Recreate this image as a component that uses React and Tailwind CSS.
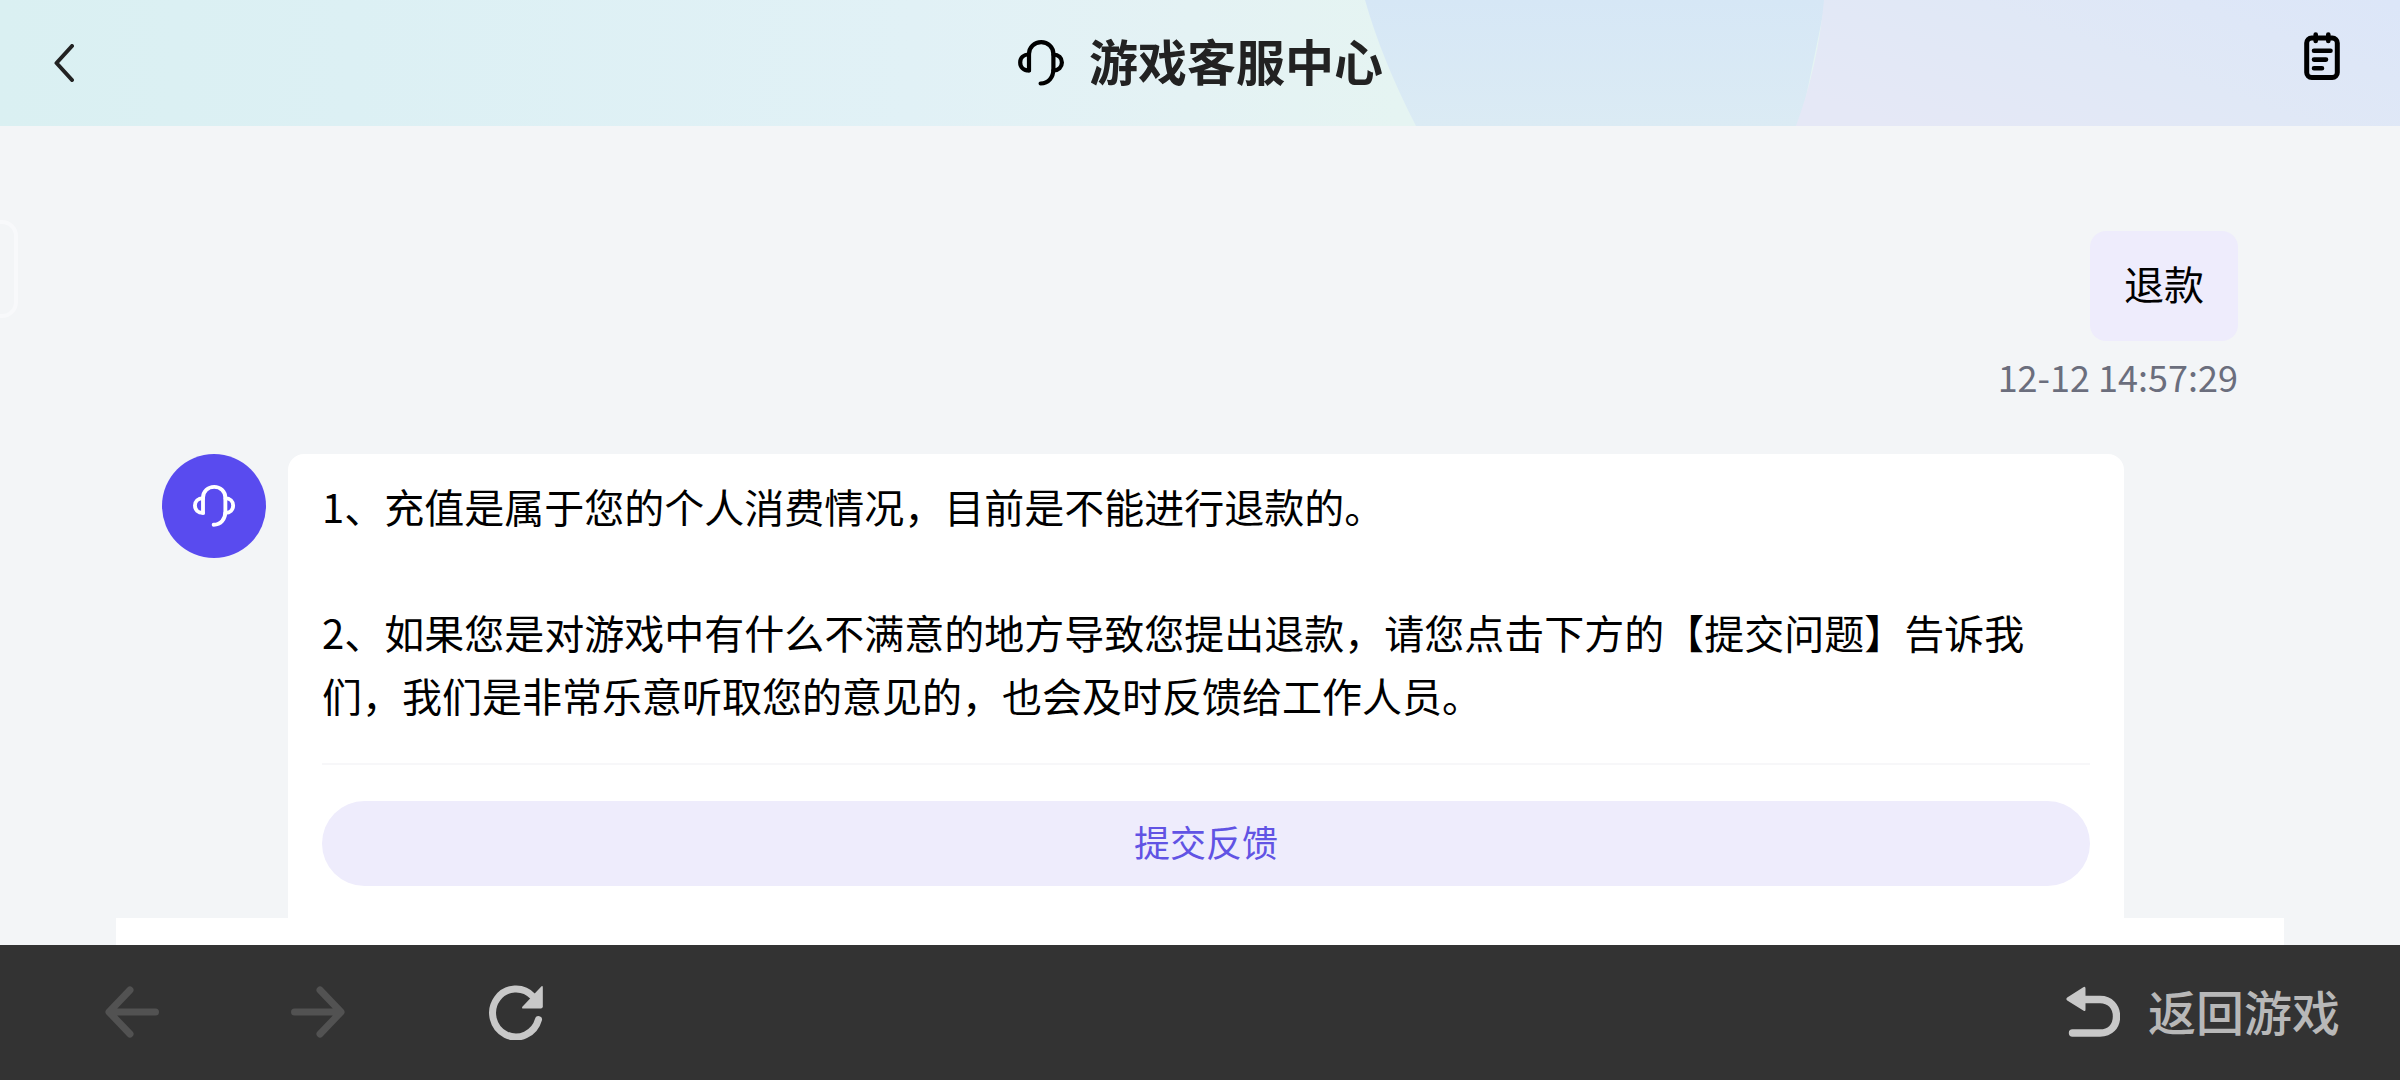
const FONT = 'font-["Noto_Sans_CJK_SC",sans-serif]';

function HeadsetIcon({ className }) {
  return (
    <svg viewBox="0 0 48 48" className={className} fill="none" stroke="currentColor" strokeWidth="4.2" strokeLinecap="round" strokeLinejoin="round" aria-hidden="true">
      <path d="M12 31.5V15C12 8 17.5 3.2 24.2 3.2S36.4 8 36.4 15V30C36.4 38.5 31.5 44.3 23.6 44.5" />
      <path d="M12 15.5C6.500 15.500 3.200 19 3.200 23.500S6.500 31.500 12 31.500" />
      <path d="M36.4 15.5C41.500 15.500 44.900 19 44.900 23.500S41.500 31.500 36.400 31.500" />
    </svg>
  );
}

function ChevronIcon() {
  return (
    <svg viewBox="0 0 20 38" className="h-[38px] w-5" fill="none" stroke="currentColor" strokeWidth="4" strokeLinecap="round" strokeLinejoin="round" aria-hidden="true">
      <path d="M18 2L2.500 19L18 36" />
    </svg>
  );
}

function NotesIcon() {
  return (
    <svg viewBox="0 0 36 48" className="h-12 w-9" fill="none" stroke="currentColor" strokeLinecap="round" aria-hidden="true">
      <rect x="2.700" y="6" width="30.600" height="39.500" rx="5" strokeWidth="5" />
      <path d="M11.700 2.500V9M24.300 2.500V9" strokeWidth="4.600" />
      <path d="M10 18.800H26.500M10 27.600H22M10 36.200H18" strokeWidth="4.600" />
    </svg>
  );
}

function ArrowIcon({ className }) {
  return (
    <svg viewBox="0 0 54 52" className={className} fill="none" stroke="currentColor" strokeWidth="7" strokeLinecap="round" strokeLinejoin="round" aria-hidden="true">
      <path d="M25 4L4 26L25 48M5 26H50.500" />
    </svg>
  );
}

function ReloadIcon() {
  return (
    <svg viewBox="0 0 54 56" className="h-14 w-[54px]" aria-hidden="true">
      <path d="M49.500 35.500A23.400 24 0 1 1 44 12.500" fill="none" stroke="currentColor" strokeWidth="7" strokeLinecap="round" />
      <path d="M53.800 3.500V22.500Q53.800 24.500 51.800 24.500H34.500Q32 24.500 33.600 22.500L51.800 3Q53.800 1 53.800 3.500Z" fill="currentColor" />
    </svg>
  );
}

function ReturnIcon() {
  return (
    <svg viewBox="0 0 54 52" className="h-[52px] w-[54px]" aria-hidden="true">
      <path d="M17 13.500H34C44 13.500 50.500 20.500 50.500 30.500S44 47 34 47H6.500" fill="none" stroke="currentColor" strokeWidth="7.400" strokeLinecap="round" />
      <path d="M19.500 2.500V23.500Q19.500 26 17.300 24.500L1.200 14.500Q-.5 13 1.200 11.500L17.300 1.200Q19.500 0 19.500 2.500Z" fill="currentColor" />
    </svg>
  );
}

function HeaderBackdrop() {
  return (
    <svg viewBox="0 0 2400 126" preserveAspectRatio="none" className="absolute inset-0 -z-10 h-full w-full" aria-hidden="true">
      <defs>
        <linearGradient id="mint" gradientUnits="userSpaceOnUse" x1="0" y1="60" x2="1400" y2="100">
          <stop offset="0" stopColor="#daf0f2" />
          <stop offset="0.250" stopColor="#dcf0f4" />
          <stop offset="0.650" stopColor="#e1f1f6" />
          <stop offset="0.850" stopColor="#e4f2f4" />
          <stop offset="1" stopColor="#e5f4f2" />
        </linearGradient>
        <linearGradient id="sky" x1="0" y1="0" x2="0" y2="1">
          <stop offset="0" stopColor="#d6e7f6" />
          <stop offset="1" stopColor="#dbebf4" />
        </linearGradient>
        <linearGradient id="lilac" gradientUnits="userSpaceOnUse" x1="1960" y1="150" x2="2060" y2="-120">
          <stop offset="0" stopColor="#e5e8f6" />
          <stop offset="0.500" stopColor="#e0e8f6" />
          <stop offset="1" stopColor="#dce6f8" />
        </linearGradient>
      </defs>
      <rect width="2400" height="126" fill="url(#mint)" />
      <path d="M1365 0Q1382 60 1416 126H1800L1826 0Z" fill="url(#sky)" />
      <path d="M1824 0Q1818 66 1796 126H2400V0Z" fill="url(#lilac)" />
    </svg>
  );
}

export default function App() {
  return (
    <div className={`${FONT} relative flex h-screen flex-col overflow-hidden bg-[#f3f5f7] text-black`}>
      <header className="relative isolate grid h-[126px] shrink-0 grid-cols-[1fr_auto_1fr] items-center">
        <HeaderBackdrop />
        <button type="button" aria-label="返回" className="justify-self-start pl-[54px] text-[#222]">
          <ChevronIcon />
        </button>
        <div className="flex items-center gap-6">
          <HeadsetIcon className="size-12" />
          <h1 className="pb-1.5 text-[49px] leading-[60px] font-bold text-[#222]">游戏客服中心</h1>
        </div>
        <button type="button" aria-label="记录" className="justify-self-end pr-[60px] pb-[14px] text-black">
          <NotesIcon />
        </button>
      </header>

      <div className="absolute top-[220px] -left-6 h-[98px] w-[42px] rounded-2xl border-4 border-[#f8f9fb]" />

      <main className="flex min-h-0 flex-1 flex-col">
        <section className="flex min-h-0 flex-1 flex-col gap-12 overflow-hidden px-[162px] pt-[105px]">
          <div className="flex flex-col items-end gap-[5px]">
            <p className="rounded-2xl bg-[#eeecfc] px-[34px] pt-[21px] pb-[27px] text-[40px] leading-[62px]">退款</p>
            <time className="text-[36px] leading-[60px] text-[#6b6e7d]">12-12 14:57:29</time>
          </div>

          <div className="flex shrink-0 items-start gap-[22px] pr-[114px]">
            <div className="grid size-[104px] shrink-0 place-items-center rounded-full bg-[#594bef] text-white">
              <HeadsetIcon className="size-11" />
            </div>
            <article className="flex-1 rounded-2xl bg-white px-[34px] pt-[21px] pb-12">
              <div className="flex flex-col gap-[63px] text-[40px] leading-[63px]">
                <p>1、充值是属于您的个人消费情况，目前是不能进行退款的。</p>
                <p>2、如果您是对游戏中有什么不满意的地方导致您提出退款，请您点击下方的【提交问题】告诉我们，我们是非常乐意听取您的意见的，也会及时反馈给工作人员。</p>
              </div>
              <hr className="mt-9 mb-9 border-t-2 border-[#f7f7f9]" />
              <button type="button" className="h-[85px] w-full rounded-full bg-[#eeecfc] pb-1.5 text-[36px] text-[#6153e4]">
                提交反馈
              </button>
            </article>
          </div>
        </section>
        <div className="mx-[116px] h-[27px] shrink-0 bg-white" />
      </main>

      <footer className="flex h-[135px] shrink-0 items-center justify-between bg-[#333] pr-[60px] pb-0.5 pl-[105px]">
        <nav className="flex items-center">
          <button type="button" disabled aria-label="后退" className="text-[#525252]">
            <ArrowIcon className="h-[52px] w-[54px]" />
          </button>
          <button type="button" disabled aria-label="前进" className="ml-[132px] text-[#525252]">
            <ArrowIcon className="h-[52px] w-[54px] rotate-180" />
          </button>
          <button type="button" aria-label="刷新" className="ml-36 text-[#c8c8c8]">
            <ReloadIcon />
          </button>
        </nav>
        <button type="button" className="flex items-center gap-7 text-[48px] leading-[60px] font-medium text-[#b8b8b8]">
          <span className="text-[#c8c8c8]">
            <ReturnIcon />
          </span>
          <span className="pb-1">返回游戏</span>
        </button>
      </footer>
    </div>
  );
}
